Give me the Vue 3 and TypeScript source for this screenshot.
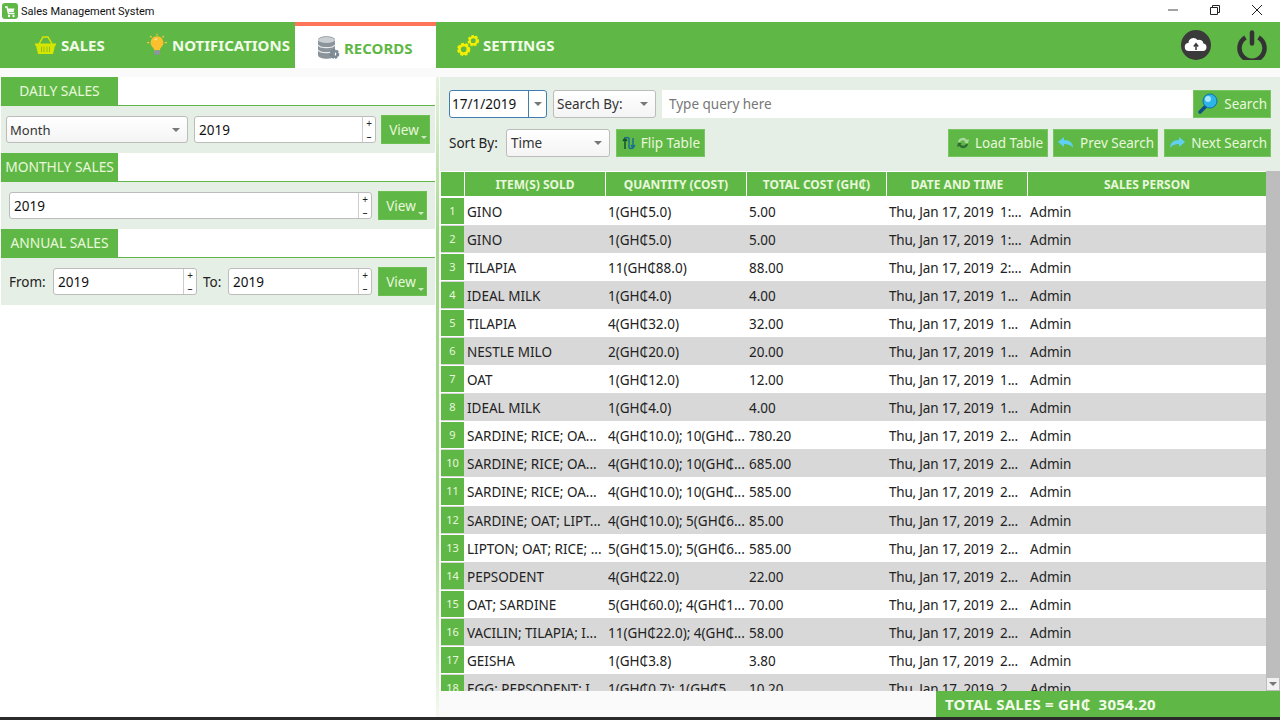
<script setup lang="ts">
interface SaleRow {
  item: string;
  qty: string;
  total: string;
  hour: string;
}

const columns = ["", "ITEM(S) SOLD", "QUANTITY (COST)", "TOTAL COST (GH₵)", "DATE AND TIME", "SALES PERSON"];

const saleDate = "Thu, Jan 17, 2019  ";

const rows: SaleRow[] = [
  { item: "GINO", qty: "1(GH₵5.0)", total: "5.00", hour: "1:..." },
  { item: "GINO", qty: "1(GH₵5.0)", total: "5.00", hour: "1:..." },
  { item: "TILAPIA", qty: "11(GH₵88.0)", total: "88.00", hour: "2:..." },
  { item: "IDEAL MILK", qty: "1(GH₵4.0)", total: "4.00", hour: "1..." },
  { item: "TILAPIA", qty: "4(GH₵32.0)", total: "32.00", hour: "1..." },
  { item: "NESTLE MILO", qty: "2(GH₵20.0)", total: "20.00", hour: "1..." },
  { item: "OAT", qty: "1(GH₵12.0)", total: "12.00", hour: "1..." },
  { item: "IDEAL MILK", qty: "1(GH₵4.0)", total: "4.00", hour: "1..." },
  { item: "SARDINE; RICE; OA...", qty: "4(GH₵10.0); 10(GH₵...", total: "780.20", hour: "2..." },
  { item: "SARDINE; RICE; OA...", qty: "4(GH₵10.0); 10(GH₵...", total: "685.00", hour: "2..." },
  { item: "SARDINE; RICE; OA...", qty: "4(GH₵10.0); 10(GH₵...", total: "585.00", hour: "2..." },
  { item: "SARDINE; OAT; LIPT...", qty: "4(GH₵10.0); 5(GH₵6...", total: "85.00", hour: "2..." },
  { item: "LIPTON; OAT; RICE; ...", qty: "5(GH₵15.0); 5(GH₵6...", total: "585.00", hour: "2..." },
  { item: "PEPSODENT", qty: "4(GH₵22.0)", total: "22.00", hour: "2..." },
  { item: "OAT; SARDINE", qty: "5(GH₵60.0); 4(GH₵1...", total: "70.00", hour: "2..." },
  { item: "VACILIN; TILAPIA; I...", qty: "11(GH₵22.0); 4(GH₵...", total: "58.00", hour: "2..." },
  { item: "GEISHA", qty: "1(GH₵3.8)", total: "3.80", hour: "2..." },
  { item: "EGG; PEPSODENT; I...", qty: "1(GH₵0.7); 1(GH₵5...", total: "10.20", hour: "2..." },
];
</script>

<template>
  <div class="window">
    <header class="titlebar">
      <svg class="app-icon" viewBox="0 0 16 16" width="16" height="16">
        <rect width="16" height="16" rx="3" fill="#5fb846" />
        <path d="M3 4h2l1.500 6.500h6" fill="none" stroke="#fff" stroke-width="1.400" />
        <path d="M5.500 5.500h7l-1 3.500h-5z" fill="#fff" />
        <circle cx="7" cy="13" r="1.200" fill="#fff" />
        <circle cx="11.500" cy="13" r="1.200" fill="#fff" />
      </svg>
      <span class="title-text">Sales Management System</span>
      <div class="window-controls">
        <svg viewBox="0 0 10 10" width="10" height="10"><path d="M0 5h10" stroke="#666" stroke-width="1.200" /></svg>
        <svg viewBox="0 0 10 10" width="10" height="10"><path d="M.5 2.500h7v7h-7zM2.500 2.500v-2h7v7h-2" fill="none" stroke="#222" /></svg>
        <svg viewBox="0 0 10 10" width="10" height="10"><path d="M0 0l10 10M10 0L0 10" stroke="#222" /></svg>
      </div>
    </header>

    <nav class="navbar">
      <div class="tab tab-sales">
        <svg viewBox="0 0 21 20" width="21" height="20">
          <path d="M4 9l4-7h5l4 7" fill="none" stroke="#d7e600" stroke-width="1.500" />
          <path d="M0 8.500h21v2h-1l-2 8.500H3L1 10.500H0z" fill="#d7e600" />
          <path d="M6.500 11.500v5.500M9 11.500v5.500M12 11.500v5.500M14.500 11.500v5.500" stroke="#8fbf1c" />
        </svg>
        <span>SALES</span>
      </div>
      <div class="tab tab-notify">
        <svg viewBox="0 0 22 25" width="20" height="24">
          <path d="M11 3a7 7 0 0 0-4.500 12.300c1 1 1.200 2 1.200 3h6.600c0-1 .2-2 1.200-3A7 7 0 0 0 11 3z" fill="#fbc02d" />
          <path d="M8.500 7a4 4 0 0 1 3-1.500" fill="none" stroke="#ffe9a0" stroke-width="1.500" />
          <rect x="7.800" y="18.300" width="6.400" height="5" rx="1.500" fill="#8d95a0" />
          <path d="M11 0v2M3.500 2.500L5 4.200M18.500 2.500L17 4.200M0 10h2.500M19.500 10H22" stroke="#f5c542" stroke-width="1.400" />
        </svg>
        <span>NOTIFICATIONS</span>
      </div>
      <div class="tab tab-active">
        <svg viewBox="0 0 23 24" width="23" height="24">
          <path d="M1 4c0-5 17-5 17 0v15c0 5-17 5-17 0z" fill="#8b949b" />
          <ellipse cx="9.500" cy="4" rx="8.500" ry="3" fill="#c9cfd3" />
          <path d="M1 9c2 3.500 15 3.500 17 0M1 14c2 3.500 15 3.500 17 0" fill="none" stroke="#e8eaeb" stroke-width="1.300" />
          <circle cx="17.500" cy="18" r="3.300" fill="none" stroke="#6f7f8b" stroke-width="3" stroke-dasharray="1.800 1" />
          <circle cx="17.500" cy="18" r="3" fill="none" stroke="#7d8b96" stroke-width="2" />
        </svg>
        <span>RECORDS</span>
      </div>
      <div class="tab tab-settings">
        <svg viewBox="0 0 24 24" width="23" height="23">
          <circle cx="17" cy="7" r="4.300" fill="none" stroke="#f6f000" stroke-width="3.400" stroke-dasharray="2.200 1.400" />
          <circle cx="17" cy="7" r="3.800" fill="none" stroke="#f6f000" stroke-width="2.200" />
          <circle cx="7" cy="16" r="5" fill="none" stroke="#f6f000" stroke-width="3.800" stroke-dasharray="2.600 1.500" />
          <circle cx="7" cy="16" r="4.500" fill="none" stroke="#f6f000" stroke-width="2.600" />
        </svg>
        <span>SETTINGS</span>
      </div>
      <div class="nav-actions">
        <svg viewBox="0 0 30 30" width="30" height="30">
          <circle cx="15" cy="15" r="15" fill="#3a3a3a" />
          <path d="M8 21a4 4 0 0 1-.5-8 5 5 0 0 1 9-3 4.500 4.500 0 0 1 6 3.500 3.800 3.800 0 0 1-.5 7.500z" fill="#fff" />
          <path d="M15 20v-5M12.800 16.500L15 13.800l2.200 2.700" fill="none" stroke="#3a3a3a" stroke-width="1.500" />
        </svg>
        <svg viewBox="0 0 30 30" width="30" height="30">
          <path d="M8.500 7.500a12.500 12.500 0 1 0 13 0" fill="none" stroke="#333" stroke-width="4.500" />
          <path d="M15 2.500v11" stroke="#333" stroke-width="4.500" stroke-linecap="round" />
        </svg>
      </div>
    </nav>

    <div class="content">
      <aside class="left-panel">
        <section>
          <h2 class="section-tab">DAILY SALES</h2>
          <div class="section-form form-daily">
            <div class="combo combo-month"><span>Month</span><i class="caret"></i></div>
            <div class="spin spin-daily"><span>2019</span><div class="spin-btns"><b>+</b><b>–</b></div></div>
            <button class="view-btn">View<i class="view-caret"></i></button>
          </div>
        </section>
        <section>
          <h2 class="section-tab">MONTHLY SALES</h2>
          <div class="section-form">
            <div class="spin spin-monthly"><span>2019</span><div class="spin-btns"><b>+</b><b>–</b></div></div>
            <button class="view-btn">View<i class="view-caret"></i></button>
          </div>
        </section>
        <section>
          <h2 class="section-tab">ANNUAL SALES</h2>
          <div class="section-form">
            <label class="from-label">From:</label>
            <div class="spin spin-annual"><span>2019</span><div class="spin-btns"><b>+</b><b>–</b></div></div>
            <label class="to-label">To:</label>
            <div class="spin spin-annual"><span>2019</span><div class="spin-btns"><b>+</b><b>–</b></div></div>
            <button class="view-btn">View<i class="view-caret"></i></button>
          </div>
        </section>
      </aside>
      <div class="divider"></div>

      <main class="right-panel">
        <div class="toolbar">
          <div class="tool-row">
            <div class="date-box"><span>17/1/2019</span><div class="date-drop"><i class="caret"></i></div></div>
            <div class="combo combo-search"><span>Search By:</span><i class="caret"></i></div>
            <div class="query">Type query here</div>
            <button class="green-btn search-btn">
              <svg viewBox="0 0 22 22" width="22" height="22">
                <path d="M9 13l-6 6" stroke="#0f4f86" stroke-width="3.500" stroke-linecap="round" />
                <circle cx="13" cy="8" r="7" fill="#2fb4ea" stroke="#0f6fa8" />
                <circle cx="11" cy="6" r="3" fill="#a6e6fb" />
              </svg>
              Search
            </button>
          </div>
          <div class="tool-row">
            <label class="sort-label">Sort By:</label>
            <div class="combo combo-sort"><span>Time</span><i class="caret"></i></div>
            <button class="green-btn flip-btn">
              <svg viewBox="0 0 14 14" width="14" height="14">
                <path d="M3 13V3M1 5l2-3 2 3" fill="none" stroke="#14532d" stroke-width="1.500" />
                <path d="M3 3c0-2 4-2 4 0v8c0 2 4 2 4 0V2M9 9l2 3 2-3" fill="none" stroke="#1b6f8e" stroke-width="1.500" />
              </svg>
              Flip Table
            </button>
            <div class="spacer"></div>
            <button class="green-btn load-btn">
              <svg viewBox="0 0 14 14" width="14" height="14">
                <path d="M2 6a5 5 0 0 1 9-2l2-1-1 4H8l1.500-1A3 3 0 0 0 4 6z" fill="#a9d8a0" />
                <path d="M12 8a5 5 0 0 1-9 2l-2 1 1-4h4L4.500 8A3 3 0 0 0 10 8z" fill="#2f6b35" />
              </svg>
              Load Table
            </button>
            <button class="green-btn prev-btn">
              <svg viewBox="0 0 18 14" width="18" height="14">
                <path d="M7 1L1 6l6 5V8c4 0 7 1 9 4 0-5-3-8-9-8z" fill="#5fd0f0" />
              </svg>
              Prev Search
            </button>
            <button class="green-btn next-btn">
              <svg viewBox="0 0 18 14" width="18" height="14">
                <path d="M11 1l6 5-6 5V8c-4 0-7 1-9 4 0-5 3-8 9-8z" fill="#5fd0f0" />
              </svg>
              Next Search
            </button>
          </div>
        </div>

        <div class="table-area">
          <div class="table-scroll">
            <div class="grid-row head-row">
              <div v-for="(col, i) in columns" :key="i" class="head-cell">{{ col }}</div>
            </div>
            <div v-for="(row, i) in rows" :key="i" class="grid-row data-row" :class="{ odd: i % 2 === 1 }">
              <div class="row-num">{{ i + 1 }}</div>
              <div class="cell">{{ row.item }}</div>
              <div class="cell">{{ row.qty }}</div>
              <div class="cell">{{ row.total }}</div>
              <div class="cell date-cell">{{ saleDate + row.hour }}</div>
              <div class="cell">Admin</div>
            </div>
          </div>
          <div class="scrollbar">
            <div class="scroll-down"><i class="caret"></i></div>
          </div>
        </div>

        <footer class="total-row">
          <div class="total-bar">TOTAL SALES = GH₵&nbsp; 3054.20</div>
        </footer>
      </main>
    </div>
    <div class="taskbar"></div>
  </div>
</template>

<style scoped>
.window {
  display: flex;
  flex-direction: column;
  width: 1280px;
  height: 720px;
  overflow: hidden;
  background: #fff;
  font-family: "Noto Sans", "Open Sans", sans-serif;
  font-size: 13.5px;
  color: #222;
}

/* title bar */
.titlebar {
  display: flex;
  align-items: center;
  flex: 0 0 22px;
  padding-left: 2px;
}

.app-icon {
  margin-right: 3px;
}

.title-text {
  font-family: Roboto, sans-serif;
  font-size: 11px;
  color: #111;
}

.window-controls {
  display: flex;
  align-items: center;
  gap: 32px;
  margin-left: auto;
  margin-top: -3px;
  padding-right: 18px;
}

/* nav bar */
.navbar {
  display: flex;
  flex: 0 0 46px;
  background: #5fb846;
}

.tab {
  display: flex;
  align-items: center;
  font-family: "Noto Sans", sans-serif;
  font-weight: 700;
  font-size: 15px;
  color: #f2fbe9;
}

.tab-sales {
  width: 136px;
  box-sizing: border-box;
  padding-left: 35px;
  gap: 5px;
}

.tab-notify {
  width: 159px;
  box-sizing: border-box;
  padding-left: 11px;
  gap: 5px;
}

.tab-active {
  width: 141px;
  box-sizing: border-box;
  padding: 2px 0 0 22px;
  gap: 4px;
  background: #fff;
  border-top: 4px solid #ff7559;
  color: #5fb846;
}

.tab-settings {
  padding-left: 21px;
  gap: 3px;
}

.nav-actions {
  display: flex;
  align-items: center;
  gap: 26px;
  margin-left: auto;
  padding-right: 13px;
}

/* body */
.content {
  display: flex;
  flex: 1;
  min-height: 0;
  background: #fafafa;
}

.left-panel {
  flex: 0 0 436px;
  box-sizing: border-box;
  margin-top: 9px;
  padding: 0 1px;
  background: #fff;
}

.divider {
  flex: 0 0 3px;
  margin-top: 9px;
  background: linear-gradient(#e6f3de, #a5d88d 25%, #a5d88d 70%, #f4f9f0);
}

.section-tab {
  margin: 0;
  width: 117px;
  height: 28px;
  line-height: 28px;
  background: #5fb846;
  color: #e9f7dc;
  font-size: 13.8px;
  font-weight: 400;
  text-align: center;
}

.section-form {
  display: flex;
  align-items: center;
  height: 47px;
  padding-left: 8px;
  background: #e6efe6;
  border-top: 1px solid #5fb846;
}

.form-daily {
  padding-left: 5px;
}

.combo,
.spin,
.date-box {
  display: flex;
  align-items: center;
  box-sizing: border-box;
  height: 27px;
  background: #fff;
  border: 1px solid #bcbcbc;
  border-radius: 3px;
}

.combo {
  justify-content: space-between;
  padding: 0 7px 0 3px;
  background: linear-gradient(#fff, #f4f4f4);
  color: #333;
}

.combo-month {
  width: 182px;
  margin-right: 6px;
  font-size: 13px;
}

.combo-search {
  width: 103px;
  height: 28px;
  margin-left: 6px;
}

.combo-sort {
  width: 104px;
  height: 28px;
  padding-left: 4px;
}

.caret {
  width: 0;
  height: 0;
  border-left: 4px solid transparent;
  border-right: 4px solid transparent;
  border-top: 4px solid #777;
}

.spin {
  justify-content: space-between;
  padding-left: 4px;
  color: #111;
}

.spin-daily {
  width: 182px;
}

.spin-monthly {
  width: 363px;
}

.spin-annual {
  width: 144px;
}

.spin-btns {
  display: flex;
  flex-direction: column;
  align-self: stretch;
  width: 12px;
  border-left: 1px solid #ccc;
}

.spin-btns b {
  flex: 1;
  font-size: 10px;
  font-weight: 400;
  line-height: 12px;
  text-align: center;
  color: #222;
}

.view-btn {
  position: relative;
  width: 49px;
  height: 29px;
  margin-left: auto;
  margin-right: 8px;
  padding: 0 3px 0 0;
  border: 1px solid #6cc052;
  background: #5fb846;
  color: #e9f7dc;
  font-family: inherit;
  font-size: 13.5px;
}

.form-daily .view-btn {
  margin-left: 5px;
  margin-right: 5px;
}

.view-caret {
  position: absolute;
  right: 2px;
  bottom: 4px;
  border-left: 3px solid transparent;
  border-right: 3px solid transparent;
  border-top: 3px solid #cfe8c2;
}

.from-label {
  width: 44px;
  white-space: nowrap;
}

.to-label {
  margin: 0 6px;
  width: 19px;
}

/* right panel */
.right-panel {
  display: flex;
  flex-direction: column;
  flex: 1;
  min-width: 0;
  margin-left: 1px;
}

.toolbar {
  display: flex;
  flex-direction: column;
  gap: 11px;
  margin-top: 9px;
  padding: 13px 9px 14px 9px;
  background: #e6efe6;
}

.tool-row {
  display: flex;
  align-items: center;
  height: 28px;
}

.date-box {
  width: 98px;
  height: 28px;
  padding-left: 2px;
  border-color: #3f7fb0;
  color: #111;
}

.date-box span {
  flex: 1;
}

.date-drop {
  display: flex;
  align-items: center;
  justify-content: center;
  align-self: stretch;
  width: 17px;
  border-left: 1px solid #3f7fb0;
}

.query {
  flex: 1;
  height: 28px;
  margin-left: 6px;
  padding-left: 7px;
  line-height: 28px;
  background: #fff;
  color: #777;
}

.green-btn {
  display: flex;
  align-items: center;
  justify-content: flex-end;
  gap: 5px;
  box-sizing: border-box;
  height: 28px;
  padding: 0 3px 0 0;
  border: 1px solid #78c662;
  background: #5fb846;
  color: #e9f7dc;
  font-family: inherit;
  font-size: 13.5px;
  white-space: nowrap;
}

.search-btn {
  width: 78px;
}

.sort-label {
  width: 57px;
}

.flip-btn {
  width: 89px;
  margin-left: 6px;
  padding-right: 4px;
}

.spacer {
  flex: 1;
}

.load-btn {
  width: 100px;
  padding-right: 4px;
}

.prev-btn {
  width: 105px;
  margin-left: 5px;
}

.next-btn {
  width: 107px;
  margin-left: 6px;
}

/* table */
.table-area {
  display: flex;
  flex: 1;
  min-height: 0;
  background: #fff;
  padding-left: 1px;
  overflow: hidden;
}

.table-scroll {
  width: 825px;
  padding-top: 1px;
  overflow: hidden;
}

.grid-row {
  display: grid;
  grid-template-columns: 23px 140px 140px 139px 140px 238px;
  column-gap: 1px;
}

.head-row {
  height: 25px;
  background: #fff;
}

.head-cell {
  height: 24px;
  line-height: 25px;
  background: #5fb846;
  color: #e9f7dc;
  font-size: 12px;
  font-weight: 700;
  text-align: center;
}

.data-row {
  height: 28.06px;
  background: #fff;
}

.data-row.odd {
  background: #d8d8d8;
}

.row-num {
  margin: 1px 0;
  background: #5fb846;
  color: #e9f7dc;
  font-size: 11px;
  line-height: 26px;
  text-align: center;
}

.cell {
  padding-left: 2px;
  line-height: 30px;
  white-space: nowrap;
  overflow: hidden;
}

.date-cell {
  letter-spacing: -0.2px;
  white-space: pre;
}

.scrollbar {
  position: relative;
  flex: 1;
  background: #bdbdbd;
}

.scroll-down {
  position: absolute;
  right: 1px;
  bottom: 1px;
  display: flex;
  align-items: center;
  justify-content: center;
  width: 12px;
  height: 12px;
  background: #f1f1f1;
}

.total-row {
  display: flex;
  justify-content: flex-end;
  flex: 0 0 26px;
}

.total-bar {
  width: 344px;
  box-sizing: border-box;
  padding-left: 9px;
  background: #5fb846;
  color: #f2fbe9;
  font-family: "Noto Sans", sans-serif;
  font-size: 15px;
  font-weight: 700;
  letter-spacing: 0.2px;
  line-height: 26px;
}

.taskbar {
  flex: 0 0 3px;
  background: #2b2b2b;
}
</style>
